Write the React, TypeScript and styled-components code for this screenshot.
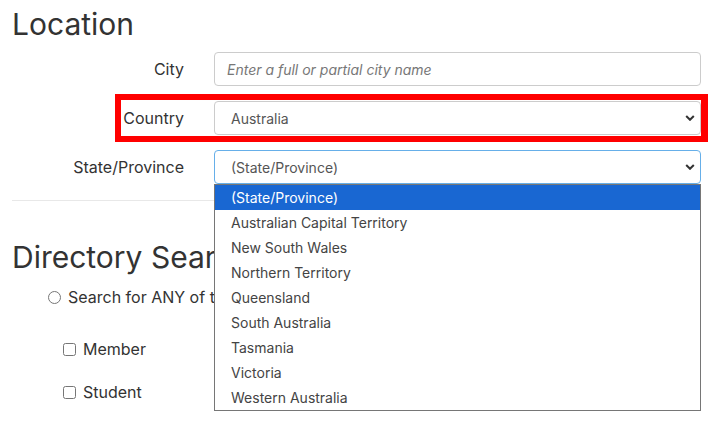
import React from 'react';
import styled, { createGlobalStyle } from 'styled-components';

const GlobalStyle = createGlobalStyle`
  html, body {
    margin: 0;
    padding: 0;
    background: #fff;
  }
  body {
    font-family: Inter, 'Noto Sans', 'Liberation Sans', sans-serif;
    color: #333;
    font-size: 16px;
  }
`;

const Page = styled.div`
  width: 716px;
  height: 422px;
  overflow: hidden;
  box-sizing: border-box;
  padding: 8px 15px 0 11px;
`;

const Heading = styled.h2<{ $top?: number }>`
  margin: ${p => p.$top ?? 0}px 0 0 1px;
  font-size: 30px;
  font-weight: 400;
  line-height: 33px;
  color: #333;
`;

const Form = styled.div`
  margin-top: 11px;
  display: flex;
  flex-direction: column;
  gap: 15px;
`;

const Row = styled.div<{ $marked?: boolean }>`
  position: relative;
  display: grid;
  grid-template-columns: 173px 487px;
  column-gap: 30px;
  align-items: center;
  height: 34px;

  ${p =>
    p.$marked &&
    `
    &::after {
      content: '';
      position: absolute;
      left: 104px;
      right: -7px;
      top: -7px;
      bottom: -7px;
      border: 6px solid #f00;
      border-right-width: 7px;
      pointer-events: none;
    }
  `}
`;

const Label = styled.label`
  text-align: right;
  font-size: 16px;
  color: #333;
`;

const Field = styled.div`
  position: relative;
  height: 34px;
`;

const TextInput = styled.input`
  box-sizing: border-box;
  width: 100%;
  height: 34px;
  padding: 0 12px;
  border: 1px solid #ccc;
  border-radius: 4px;
  font-family: inherit;
  font-size: 14px;
  color: #555;
  outline: none;

  &::placeholder {
    color: #777;
    font-style: italic;
  }
`;

const SelectBox = styled.div<{ $focused?: boolean }>`
  box-sizing: border-box;
  display: flex;
  align-items: center;
  justify-content: space-between;
  width: 100%;
  height: 34px;
  padding: 0 5px 0 16px;
  border: 1px solid ${p => (p.$focused ? '#66afe9' : '#ccc')};
  border-radius: 4px;
  font-size: 14px;
  color: #555;
  background: #fff;
`;

const Menu = styled.ul`
  position: absolute;
  top: 34px;
  left: 0;
  right: 0;
  margin: 0;
  padding: 0;
  list-style: none;
  background: #fff;
  border: 1px solid #767676;
  z-index: 10;
`;

const Option = styled.li<{ $active?: boolean }>`
  height: 25px;
  line-height: 25px;
  padding-left: 16px;
  font-size: 14px;
  color: ${p => (p.$active ? '#fff' : '#444')};
  background: ${p => (p.$active ? '#1967d2' : 'transparent')};
`;

const Divider = styled.hr`
  margin: 16px 0 0 1px;
  border: 0;
  border-top: 1px solid #e8e8e8;
`;

const ChoiceRow = styled.label<{ $indent: number; $top: number }>`
  display: flex;
  align-items: center;
  gap: 7px;
  margin: ${p => p.$top}px 0 0 ${p => p.$indent}px;
  height: 24px;
  font-size: 16px;
  color: #333;

  input {
    margin: 0;
    width: 13px;
    height: 13px;
  }
`;

const Chevron = () => (
  <svg width="10" height="6" viewBox="0 0 10 6">
    <path d="M1.2 1 L5 4.8 L8.8 1" fill="none" stroke="#333" strokeWidth="2" />
  </svg>
);

const states = [
  '(State/Province)',
  'Australian Capital Territory',
  'New South Wales',
  'Northern Territory',
  'Queensland',
  'South Australia',
  'Tasmania',
  'Victoria',
  'Western Australia',
];

export default function App() {
  return (
    <Page>
      <GlobalStyle />
      <Heading>Location</Heading>
      <Form>
        <Row>
          <Label>City</Label>
          <Field>
            <TextInput placeholder="Enter a full or partial city name" />
          </Field>
        </Row>
        <Row $marked>
          <Label>Country</Label>
          <Field>
            <SelectBox>
              <span>Australia</span>
              <Chevron />
            </SelectBox>
          </Field>
        </Row>
        <Row>
          <Label>State/Province</Label>
          <Field>
            <SelectBox $focused>
              <span>(State/Province)</span>
              <Chevron />
            </SelectBox>
            <Menu>
              {states.map((s, i) => (
                <Option key={s} $active={i === 0}>
                  {s}
                </Option>
              ))}
            </Menu>
          </Field>
        </Row>
      </Form>
      <Divider />
      <Heading $top={40}>Directory Search</Heading>
      <ChoiceRow $indent={37} $top={11}>
        <input type="radio" name="mode" />
        Search for ANY of the following
      </ChoiceRow>
      <ChoiceRow $indent={52} $top={28}>
        <input type="checkbox" />
        Member
      </ChoiceRow>
      <ChoiceRow $indent={52} $top={19}>
        <input type="checkbox" />
        Student
      </ChoiceRow>
    </Page>
  );
}
